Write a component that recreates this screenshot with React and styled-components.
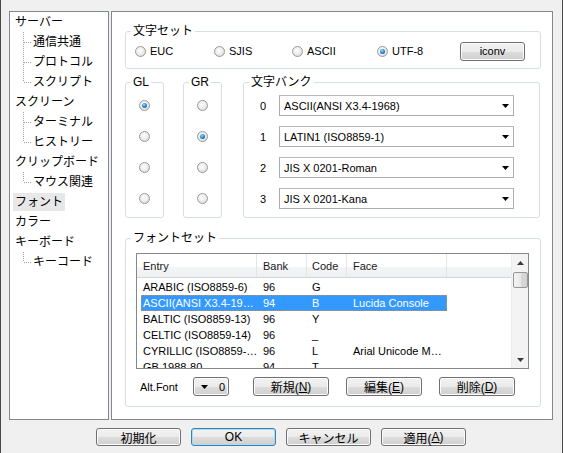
import React from 'react';
import styled, { createGlobalStyle, css } from 'styled-components';

const Global = createGlobalStyle`
  html, body { margin: 0; padding: 0; background: #f0f0f0; }
  body {
    font-family: "Liberation Sans", "Noto Sans CJK JP", sans-serif;
    font-size: 12px;
    color: #000;
  }
  * { box-sizing: border-box; }
`;

const Window = styled.div`
  width: 563px;
  height: 453px;
  background: #f0f0f0;
  border-left: 1px solid #4a4a4a;
  border-right: 1px solid #4a4a4a;
  padding: 11px 9px 0 8px;
  display: flex;
  flex-direction: column;
`;

const Main = styled.div`
  height: 409px;
  display: flex;
  gap: 2px;
`;

/* ---------- Tree ---------- */
const Tree = styled.div`
  width: 100px;
  background: #fff;
  border: 1px solid #828790;
  padding: 0 0 0 3px;
  display: flex;
  flex-direction: column;
`;

const TreeRow = styled.div`
  height: 20px;
  display: flex;
  align-items: center;
  padding-left: ${p => (p.$level ? 10 : 0)}px;
`;

const TreeLabel = styled.span`
  height: 18px;
  line-height: 18px;
  padding: 0 2px;
  font-size: 12px;
  white-space: nowrap;
  background: ${p => (p.$selected ? '#e8e8e8' : 'transparent')};
`;

const Connector = ({ last }) => (
  <svg width="8" height="20" style={{ flex: 'none', display: 'block' }}>
    <line x1="0.5" y1="0" x2="0.5" y2={last ? 10 : 20} stroke="#a0a0a0" strokeDasharray="1 1" />
    <line x1="1" y1="10.5" x2="8" y2="10.5" stroke="#a0a0a0" strokeDasharray="1 1" />
  </svg>
);

/* ---------- Right panel ---------- */
const Panel = styled.div`
  flex: 1;
  background: #fff;
  border: 1px solid #828790;
  padding: 13px 11px 0 13px;
  display: flex;
  flex-direction: column;
`;

const Group = styled.fieldset`
  margin: 0;
  min-width: 0;
  border: 1px solid #d5dfe5;
  border-radius: 3px;
  padding: ${p => p.$pad || '0'};
  width: ${p => (p.$w ? `${p.$w}px` : 'auto')};
`;

const Legend = styled.legend`
  margin-left: 5px;
  padding: 0 2px;
  font-size: 12px;
  line-height: 12px;
  height: 12px;
`;

const CharsetRow = styled.div`
  display: grid;
  grid-template-columns: 79px 78px 85px 83px 65px;
  align-items: center;
  height: 20px;
  padding-left: 9px;
`;

const RadioItem = styled.label`
  display: flex;
  align-items: center;
  gap: 4px;
  font-size: 11px;
`;

const RadioDot = styled.span`
  width: 11px;
  height: 11px;
  border-radius: 50%;
  border: 1px solid #9a9a9a;
  background: radial-gradient(circle at 45% 40%, #ffffff 0%, #ececec 50%, #cdcdcd 100%);
  display: inline-flex;
  align-items: center;
  justify-content: center;
  flex: none;
  ${p =>
    p.$checked &&
    css`
      &::after {
        content: '';
        width: 5px;
        height: 5px;
        border-radius: 50%;
        background: radial-gradient(circle at 40% 35%, #9adcff 0%, #2b8fdb 45%, #0a3d75 100%);
      }
    `}
`;

const Button = styled.div`
  width: ${p => p.$w || 85}px;
  height: ${p => p.$h || 18}px;
  border: 1px solid ${p => (p.$default ? '#3c7fb1' : '#707070')};
  border-radius: 3px;
  background: linear-gradient(#f2f2f2 0%, #ebebeb 50%, #dddddd 51%, #cfcfcf 100%);
  box-shadow: inset 0 0 0 1px ${p => (p.$default ? '#a8dcf5' : '#fcfcfc')};
  display: flex;
  align-items: center;
  justify-content: center;
  font-size: ${p => p.$fs || 12}px;
  flex: none;
  u { text-decoration: underline; }
`;

const MidRow = styled.div`
  display: flex;
  margin-top: 7px;
`;

const RadioCol = styled.div`
  display: flex;
  flex-direction: column;
  padding: 2px 0 3px;
`;

const Cell31 = styled.div`
  height: 31px;
  display: flex;
  align-items: center;
  justify-content: ${p => (p.$center ? 'center' : 'flex-start')};
`;

const BankNum = styled.span`
  width: 8px;
  margin-left: 15px;
  margin-right: 12px;
  text-align: center;
  font-size: 11px;
`;

const Combo = styled.div`
  width: 235px;
  height: 21px;
  border: 1px solid #abadb3;
  border-top-color: #b8bac0;
  background: #fff;
  display: flex;
  align-items: center;
  justify-content: space-between;
  padding: 0 4px 0 4px;
  font-size: 11px;
`;

const Arrow = ({ color = '#000' }) => (
  <svg width="7" height="4" style={{ display: 'block', flex: 'none' }}>
    <polygon points="0,0 7,0 3.5,4" fill={color} />
  </svg>
);

/* ---------- List ---------- */
const List = styled.div`
  margin: 9px 11px 0 10px;
  height: 116px;
  border: 1px solid #828790;
  background: #fff;
  display: flex;
  overflow: hidden;
`;

const ListMain = styled.div`
  flex: 1;
  display: flex;
  flex-direction: column;
  overflow: hidden;
`;

const Header = styled.div`
  height: 24px;
  flex: none;
  display: flex;
  border-bottom: 1px solid #d5d5d5;
  background: linear-gradient(#ffffff 0%, #ffffff 55%, #f4f5f7 56%, #eff0f2 100%);
`;

const HeadCell = styled.div`
  width: ${p => (p.$w ? `${p.$w}px` : 'auto')};
  flex: ${p => (p.$w ? 'none' : '1')};
  border-right: ${p => (p.$w ? '1px solid #e3e5e8' : 'none')};
  padding-left: ${p => p.$pl}px;
  display: flex;
  align-items: center;
  font-size: 11px;
  color: #1a1a1a;
`;

const Body = styled.div`
  padding: 1px 0 0 4px;
`;

const Row = styled.div`
  width: 306px;
  height: 16px;
  display: flex;
  align-items: center;
  font-size: 11px;
  ${p =>
    p.$selected &&
    css`
      background: #3399ff;
      color: #fff;
      outline: 1px dotted #c98a4b;
      outline-offset: -1px;
    `}
`;

const Cell = styled.div`
  width: ${p => p.$w}px;
  padding-left: ${p => p.$pl}px;
  white-space: nowrap;
  overflow: hidden;
  flex: none;
`;

const Scrollbar = styled.div`
  width: 17px;
  flex: none;
  background: #f3f3f3;
  border-left: 1px solid #ececec;
  display: flex;
  flex-direction: column;
  align-items: center;
`;

const ScrollArrow = styled.div`
  height: 17px;
  width: 100%;
  display: flex;
  align-items: center;
  justify-content: center;
`;

const Thumb = styled.div`
  width: 15px;
  height: 16px;
  margin-top: 1px;
  border: 1px solid #979797;
  border-radius: 2px;
  background: linear-gradient(90deg, #f3f3f3 0%, #e8e8e8 50%, #d9d9d9 51%, #d2d2d2 100%);
`;

const Track = styled.div`
  flex: 1;
`;

const BottomRow = styled.div`
  display: flex;
  align-items: center;
  height: 19px;
  margin: 8px 0 10px 14px;
`;

const AltLabel = styled.span`
  width: 53px;
  font-size: 11px;
`;

const Spin = styled.div`
  width: 36px;
  height: 19px;
  margin-right: 24px;
  border: 1px solid #707070;
  border-radius: 3px;
  background: linear-gradient(#f2f2f2 0%, #ebebeb 50%, #dddddd 51%, #cfcfcf 100%);
  box-shadow: inset 0 0 0 1px #fcfcfc;
  display: flex;
  align-items: center;
  justify-content: space-between;
  padding: 0 3px 0 7px;
  font-size: 11px;
`;

const BtnGroup = styled.div`
  display: flex;
  gap: 17px;
`;

const Footer = styled.div`
  margin-top: 8px;
  display: flex;
  justify-content: center;
  gap: 10px;
`;

const tree = [
  { label: 'サーバー', level: 0 },
  { label: '通信共通', level: 1 },
  { label: 'プロトコル', level: 1 },
  { label: 'スクリプト', level: 1, last: true },
  { label: 'スクリーン', level: 0 },
  { label: 'ターミナル', level: 1 },
  { label: 'ヒストリー', level: 1, last: true },
  { label: 'クリップボード', level: 0 },
  { label: 'マウス関連', level: 1, last: true },
  { label: 'フォント', level: 0, selected: true },
  { label: 'カラー', level: 0 },
  { label: 'キーボード', level: 0 },
  { label: 'キーコード', level: 1, last: true },
];

const banks = [
  'ASCII(ANSI X3.4-1968)',
  'LATIN1 (ISO8859-1)',
  'JIS X 0201-Roman',
  'JIS X 0201-Kana',
];

const rows = [
  ['ARABIC (ISO8859-6)', '96', 'G', ''],
  ['ASCII(ANSI X3.4-19…', '94', 'B', 'Lucida Console', true],
  ['BALTIC (ISO8859-13)', '96', 'Y', ''],
  ['CELTIC (ISO8859-14)', '96', '_', ''],
  ['CYRILLIC (ISO8859-…', '96', 'L', 'Arial Unicode M…'],
  ['GB 1988-80', '94', 'T', ''],
];

export default function App() {
  return (
    <>
      <Global />
      <Window>
        <Main>
          <Tree>
            {tree.map(t => (
              <TreeRow key={t.label} $level={t.level}>
                {t.level ? <Connector last={t.last} /> : null}
                <TreeLabel $selected={t.selected}>{t.label}</TreeLabel>
              </TreeRow>
            ))}
          </Tree>
          <Panel>
            <Group $pad="4px 0 7px 0">
              <Legend>文字セット</Legend>
              <CharsetRow>
                <RadioItem><RadioDot />EUC</RadioItem>
                <RadioItem><RadioDot />SJIS</RadioItem>
                <RadioItem><RadioDot />ASCII</RadioItem>
                <RadioItem><RadioDot $checked />UTF-8</RadioItem>
                <Button $w={65} $h={19} $fs={11}>iconv</Button>
              </CharsetRow>
            </Group>

            <MidRow>
              <Group $w={39} style={{ marginRight: 19 }}>
                <Legend>GL</Legend>
                <RadioCol>
                  {[0, 1, 2, 3].map(i => (
                    <Cell31 key={i} $center><RadioDot $checked={i === 0} /></Cell31>
                  ))}
                </RadioCol>
              </Group>
              <Group $w={39} style={{ marginRight: 21 }}>
                <Legend>GR</Legend>
                <RadioCol>
                  {[0, 1, 2, 3].map(i => (
                    <Cell31 key={i} $center><RadioDot $checked={i === 1} /></Cell31>
                  ))}
                </RadioCol>
              </Group>
              <Group $w={297}>
                <Legend>文字バンク</Legend>
                <RadioCol>
                  {banks.map((b, i) => (
                    <Cell31 key={b}>
                      <BankNum>{i}</BankNum>
                      <Combo>
                        <span>{b}</span>
                        <Arrow />
                      </Combo>
                    </Cell31>
                  ))}
                </RadioCol>
              </Group>
            </MidRow>

            <Group style={{ marginTop: 14 }}>
              <Legend>フォントセット</Legend>
              <List>
                <ListMain>
                  <Header>
                    <HeadCell $w={120} $pl={6}>Entry</HeadCell>
                    <HeadCell $w={50} $pl={6}>Bank</HeadCell>
                    <HeadCell $w={40} $pl={5}>Code</HeadCell>
                    <HeadCell $w={100} $pl={6}>Face</HeadCell>
                    <HeadCell $pl={0} />
                  </Header>
                  <Body>
                    {rows.map(r => (
                      <Row key={r[0]} $selected={r[4]}>
                        <Cell $w={116} $pl={2}>{r[0]}</Cell>
                        <Cell $w={50} $pl={6}>{r[1]}</Cell>
                        <Cell $w={40} $pl={5}>{r[2]}</Cell>
                        <Cell $w={100} $pl={6}>{r[3]}</Cell>
                      </Row>
                    ))}
                  </Body>
                </ListMain>
                <Scrollbar>
                  <ScrollArrow>
                    <svg width="7" height="4" style={{ display: 'block' }}>
                      <polygon points="3.5,0 7,4 0,4" fill="#3a3a3a" />
                    </svg>
                  </ScrollArrow>
                  <Thumb />
                  <Track />
                  <ScrollArrow>
                    <Arrow color="#3a3a3a" />
                  </ScrollArrow>
                </Scrollbar>
              </List>
              <BottomRow>
                <AltLabel>Alt.Font</AltLabel>
                <Spin>
                  <Arrow />
                  <span>0</span>
                </Spin>
                <BtnGroup>
                  <Button $w={76} $h={19}>新規(<u>N</u>)</Button>
                  <Button $w={76} $h={19}>編集(<u>E</u>)</Button>
                  <Button $w={76} $h={19}>削除(<u>D</u>)</Button>
                </BtnGroup>
              </BottomRow>
            </Group>
          </Panel>
        </Main>
        <Footer>
          <Button>初期化</Button>
          <Button $default>OK</Button>
          <Button>キャンセル</Button>
          <Button>適用(<u>A</u>)</Button>
        </Footer>
      </Window>
    </>
  );
}
